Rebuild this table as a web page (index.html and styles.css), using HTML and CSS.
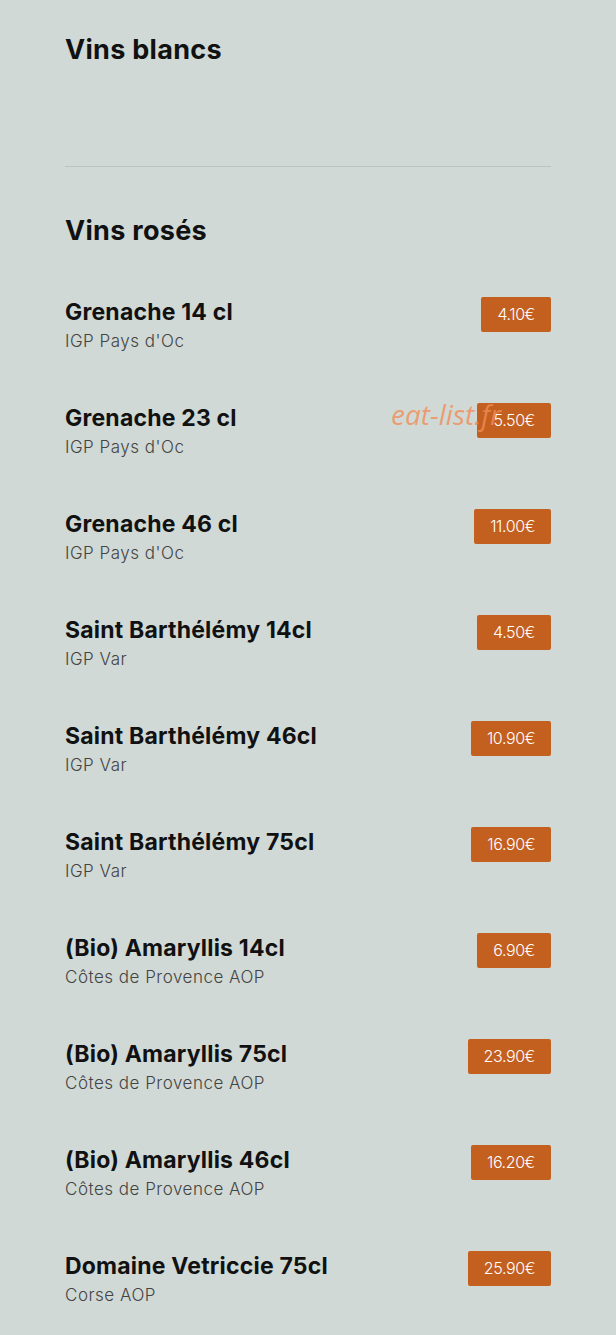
FILE: index.html
```html
<!DOCTYPE html>
<html lang="fr">
<head>
<meta charset="utf-8">
<title>Carte des vins</title>
<link rel="stylesheet" href="styles.css">
</head>
<body>
<main class="menu">
  <section class="category">
    <h2 class="category-title">Vins blancs</h2>
  </section>
  <hr class="divider">
  <section class="category">
    <h2 class="category-title rose">Vins rosés</h2>
    <ul class="items">
      <li class="item"><div class="info"><h3 class="name">Grenache 14 cl</h3><p class="desc">IGP Pays d'Oc</p></div><span class="price">4.10€</span></li>
      <li class="item"><div class="info"><h3 class="name">Grenache 23 cl</h3><p class="desc">IGP Pays d'Oc</p></div><span class="price">5.50€</span><span class="watermark">eat-list.fr</span></li>
      <li class="item"><div class="info"><h3 class="name">Grenache 46 cl</h3><p class="desc">IGP Pays d'Oc</p></div><span class="price">11.00€</span></li>
      <li class="item"><div class="info"><h3 class="name">Saint Barthélémy 14cl</h3><p class="desc">IGP Var</p></div><span class="price">4.50€</span></li>
      <li class="item"><div class="info"><h3 class="name">Saint Barthélémy 46cl</h3><p class="desc">IGP Var</p></div><span class="price">10.90€</span></li>
      <li class="item"><div class="info"><h3 class="name">Saint Barthélémy 75cl</h3><p class="desc">IGP Var</p></div><span class="price">16.90€</span></li>
      <li class="item"><div class="info"><h3 class="name">(Bio) Amaryllis 14cl</h3><p class="desc">Côtes de Provence AOP</p></div><span class="price">6.90€</span></li>
      <li class="item"><div class="info"><h3 class="name">(Bio) Amaryllis 75cl</h3><p class="desc">Côtes de Provence AOP</p></div><span class="price">23.90€</span></li>
      <li class="item"><div class="info"><h3 class="name">(Bio) Amaryllis 46cl</h3><p class="desc">Côtes de Provence AOP</p></div><span class="price">16.20€</span></li>
      <li class="item"><div class="info"><h3 class="name">Domaine Vetriccie 75cl</h3><p class="desc">Corse AOP</p></div><span class="price">25.90€</span></li>
    </ul>
  </section>
</main>
</body>
</html>
```
FILE: styles.css
```css
html, body {
  margin: 0;
  padding: 0;
  background: #d0d9d5;
}
body {
  font-family: Inter, "Noto Sans", sans-serif;
  color: #121212;
}
.menu {
  padding: 34px 65px 0 65px;
}
.category-title {
  margin: 0;
  font-size: 27px;
  line-height: 32px;
  font-weight: 700;
  color: #111;
  letter-spacing: 0.3px;
}
.divider {
  border: 0;
  border-top: 1px solid #b9c3bf;
  margin: 100px 0 48px 0;
}
.items {
  list-style: none;
  margin: 50px 0 0 0;
  padding: 0;
}
.item {
  position: relative;
  display: flex;
  justify-content: space-between;
  align-items: flex-start;
  height: 56px;
  margin-bottom: 50px;
}
.name {
  margin: 0;
  font-size: 23px;
  line-height: 30px;
  font-weight: 700;
  color: #111;
  letter-spacing: 0.2px;
}
.desc {
  margin: 2px 0 0 0;
  font-size: 17px;
  line-height: 24px;
  font-weight: 300;
  color: #444;
  letter-spacing: 0.5px;
}
.price {
  background: #c4601f;
  color: #fff;
  font-size: 16px;
  font-weight: 300;
  line-height: 35px;
  height: 35px;
  padding: 0 16px;
  border-radius: 2px;
  letter-spacing: -0.4px;
}
.watermark {
  position: absolute;
  right: 50px;
  top: -8px;
  font-family: "Open Sans", sans-serif;
  font-style: italic;
  font-size: 28px;
  color: rgba(242, 140, 88, 0.8);
  pointer-events: none;
}
```
